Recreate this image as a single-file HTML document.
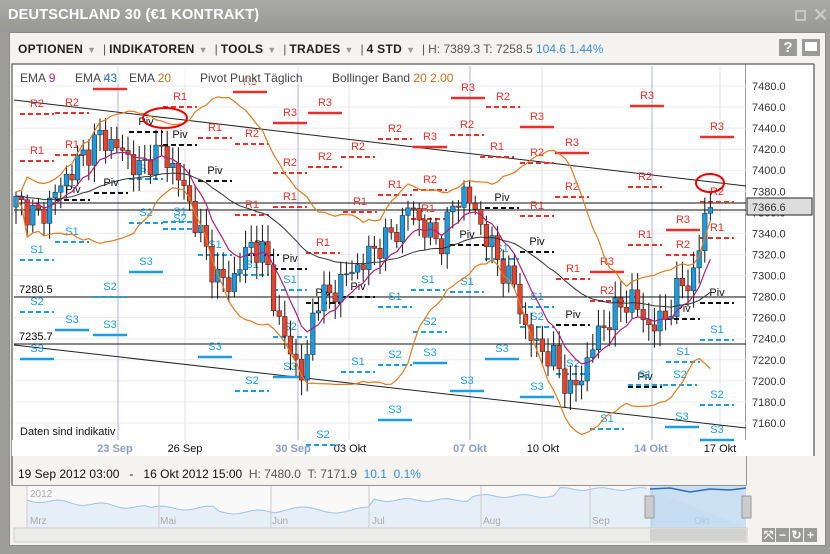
<!DOCTYPE html>
<html><head><meta charset="utf-8"><style>
*{margin:0;padding:0;box-sizing:border-box}
body{width:830px;height:554px;overflow:hidden;background:#9d9e9a;font-family:"Liberation Sans",sans-serif;position:relative}
#title{position:absolute;left:0;top:0;width:830px;height:32px;background:linear-gradient(#aaaba7,#979894);}
#title span{position:absolute;left:8px;top:7px;color:#fff;font-weight:bold;font-size:14.5px;letter-spacing:0.2px}
#panel{position:absolute;left:9px;top:32px;width:817px;height:514px;background:#f4f3ef;border:1px solid #8a8a86}
#tb{position:absolute;left:18px;top:42px;font-size:12px;color:#222;white-space:nowrap}
#tb b{font-weight:bold;letter-spacing:0.3px}
.ar{color:#999;font-size:9px;margin:0 4px}
.sep{color:#555;margin:0 3px}
.ib{position:absolute;top:39px;width:18px;height:17px;background:#9a9a96;color:#fff;font-weight:bold;font-size:15px;text-align:center;line-height:17px}
svg{position:absolute;left:0;top:0}
</style></head><body>
<div id="title"><span>DEUTSCHLAND 30 (€1 KONTRAKT)</span>
<div style="position:absolute;left:795px;top:10px;width:11px;height:11px;border:2px solid #c8c9c5;"></div>
<div style="position:absolute;left:813px;top:5px;color:#c8c9c5;font-size:18px;font-weight:bold">✕</div></div>
<div id="panel"></div>
<div id="tb"><b>OPTIONEN</b><span class="ar">▼</span><span class="sep">|</span><b>INDIKATOREN</b><span class="ar">▼</span><span class="sep">|</span><b>TOOLS</b><span class="ar">▼</span><span class="sep">|</span><b>TRADES</b><span class="ar">▼</span><span class="sep">|</span><b>4 STD</b><span class="ar">▼</span><span class="sep">|</span><span style="color:#555">H: 7389.3 T: 7258.5 </span><span style="color:#3a8fd0">104.6 1.44%</span></div>
<div class="ib" style="left:779px">?</div>
<div class="ib" style="left:802px"><div style="width:12px;height:9px;background:#fff;margin:3px auto 0"></div></div>
<svg id="s" width="830" height="554" font-family="Liberation Sans, sans-serif"></svg>
<div style="position:absolute;left:18px;top:467px;font-size:12px;color:#111;white-space:nowrap">19 Sep 2012 03:00 &nbsp; - &nbsp; 16 Okt 2012 15:00 &nbsp;<span style="color:#555">H: 7480.0 &nbsp;T: 7171.9</span> &nbsp;<span style="color:#3a8fd0">10.1 &nbsp;0.1%</span></div>
<script>
const S=document.getElementById('s');let h='';
const y=p=>86+(7480-p)*1.053;
h+='<rect x="12" y="64" width="734" height="421" fill="#fff" stroke="#333"/>';
h+='<rect x="746" y="64" width="68" height="392" fill="#fff"/>';
h+='<line x1="746" y1="64" x2="814" y2="64" stroke="#333"/><line x1="814" y1="64" x2="814" y2="456" stroke="#333"/>';
h+='<rect x="12" y="456" width="734" height="29" fill="#f4f3ef"/><line x1="12" y1="456" x2="12" y2="485" stroke="#333"/>';
h+='<rect x="12" y="440" width="734" height="16" fill="#fff"/>';
for(let p=7160;p<=7480;p+=20){h+=`<line x1="14" y1="${y(p)}" x2="746" y2="${y(p)}" stroke="#ececec"/>`;h+=`<text x="752" y="${y(p)+4}" font-size="11" fill="#333">${p}.0</text>`;}
const vg=[[118,1],[185,0],[298,1],[349,0],[470,1],[542,0],[652,1],[720,0]];
vg.forEach(v=>h+=`<line x1="${v[0]}" y1="66" x2="${v[0]}" y2="440" stroke="${v[1]?'#aab4d8':'#e2e2e2'}"/>`);
const dl=[[115,'23 Sep',1],[185,'26 Sep',0],[293,'30 Sep',1],[350,'03 Okt',0],[470,'07 Okt',1],[543,'10 Okt',0],[651,'14 Okt',1],[720,'17 Okt',0]];
dl.forEach(d=>h+=`<text x="${d[0]}" y="452" font-size="11" text-anchor="middle" fill="${d[2]?'#8a9cc0':'#111'}" ${d[2]?'font-weight="bold"':''}>${d[1]}</text>`);
h+='<line x1="14" y1="100" x2="746" y2="186" stroke="#222"/><line x1="14" y1="345" x2="746" y2="428" stroke="#222"/>';
h+='<line x1="14" y1="203" x2="746" y2="203" stroke="#111"/><line x1="14" y1="210" x2="746" y2="210" stroke="#111"/>';
h+='<line x1="14" y1="297" x2="746" y2="297" stroke="#111"/><line x1="14" y1="344" x2="746" y2="344" stroke="#111"/>';
h+='<text x="19" y="293" font-size="11">7280.5</text><text x="19" y="340" font-size="11">7235.7</text>';
const R='#e8302a',B='#1c9de0';
function lv(t,x,yy,c,solid){const col=t[0]=='R'?R:(t[0]=='S'?B:'#111');h+=`<text x="${x}" y="${yy}" font-size="11" text-anchor="middle" fill="${col}">${t}</text>`;h+=`<line x1="${x-17}" y1="${yy+7}" x2="${x+17}" y2="${yy+7}" stroke="${col}" stroke-width="${t[1]=='3'?2.5:2}" ${solid?'':'stroke-dasharray="5,3"'}/>`;}
const L=[['R2',37,107],['R2',72,106],['R3',110,82],['R1',180,100],['R3',250,85],['R3',290,116],['R3',325,106],['R3',468,91],['R2',503,100],['R3',537,120],['R3',647,99],['R3',717,130],['R1',37,154],['R1',72,148],['R1',215,131],['R2',252,137],['R2',395,132],['R3',430,140],['R2',467,128],['R3',572,146],['R2',358,150],['R2',325,160],['R2',290,166],['R1',497,150],['R2',537,156],['R1',395,188],['R2',430,183],['R2',572,190],['R2',645,180],['R2',717,195],['R1',252,208],['R1',290,200],['R1',360,205],['R1',428,212],['R1',537,209],['R3',683,223],['R1',645,238],['R2',683,248],['R1',717,231],['R1',323,246],['R1',573,272],['R3',607,265],['R2',607,294],
['Piv',73,193],['Piv',111,186],['Piv',146,125],['Piv',180,138],['Piv',215,174],['Piv',262,248],['Piv',290,262],['Piv',323,296],['Piv',358,290],['Piv',467,238],['Piv',502,201],['Piv',537,245],['Piv',573,318],['Piv',645,380],['Piv',683,312],['Piv',717,296],
['S1',37,253],['S1',72,235],['S1',146,172],['S1',180,215],['S1',215,248],['S1',252,268],['S1',290,283],['S1',358,365],['S1',395,300],['S1',428,283],['S1',467,285],['S1',502,252],['S1',537,300],['S1',645,378],['S1',683,355],['S1',717,333],['S1',607,422],
['S2',37,305],['S2',110,290],['S2',146,216],['S2',180,222],['S2',252,384],['S2',290,330],['S2',323,438],['S2',395,358],['S2',430,325],['S2',537,320],['S2',573,367],['S2',680,378],['S2',717,398],
['S3',37,352],['S3',72,323],['S3',110,328],['S3',146,265],['S3',215,350],['S3',290,370],['S3',395,413],['S3',430,356],['S3',467,384],['S3',502,352],['S3',537,390],['S3',682,420],['S3',717,433]];
L.forEach(l=>lv(l[0],l[1],l[2],0,l[0][1]=='3'));
const cp=[[15,7370],[40,7355],[60,7385],[80,7410],[100,7432],[120,7420],[140,7400],[160,7420],[175,7400],[185,7380],[200,7340],[215,7300],[230,7290],[250,7330],[265,7320],[280,7250],[295,7220],[305,7200],[315,7280],[330,7280],[345,7300],[360,7310],[380,7330],[400,7345],[410,7370],[420,7350],[440,7330],[455,7370],[465,7380],[480,7350],[500,7310],[515,7290],[525,7250],[540,7230],[555,7220],[570,7190],[580,7200],[595,7240],[610,7260],[630,7280],[650,7250],[665,7260],[680,7290],[695,7300],[705,7360],[712,7366]];
function ip(x){for(let i=1;i<cp.length;i++){if(x<=cp[i][0]){const a=cp[i-1],b=cp[i];return a[1]+(b[1]-a[1])*(x-a[0])/(b[0]-a[0]);}}return 7366;}
let cl=[],xs=[],prev=7365;
for(let i=0;i<125;i++){const x=16+i*5.6;const c=ip(x)+Math.sin(i*2.3)*9+Math.cos(i*1.7)*6;xs.push(x);cl.push(c);
const o=prev;const hi=Math.max(o,c)+4+Math.abs(Math.sin(i*3.1))*12,lo=Math.min(o,c)-4-Math.abs(Math.cos(i*2.7))*12;
h+=`<line x1="${x}" y1="${y(hi)}" x2="${x}" y2="${y(lo)}" stroke="#111"/>`;
const up=c>=o;h+=`<rect x="${x-2.3}" y="${y(Math.max(o,c))}" width="4.6" height="${Math.max(1,Math.abs(o-c)*1.053)}" fill="${up?'#1a9be0':'#e8412c'}" stroke="#222" stroke-width="0.5"/>`;prev=c;}
function ema(n){let e=cl[0],k=2/(n+1),r=[];cl.forEach(c=>{e=c*k+e*(1-k);r.push(e)});return r;}
const pl=(a,col,w)=>{h+=`<polyline fill="none" stroke="${col}" stroke-width="${w}" points="${a.map((v,i)=>xs[i]+','+y(v)).join(' ')}"/>`;};
pl(ema(9),'#b0207a',1.2);pl(ema(43),'#333',1);
let up=[],dn=[];for(let i=0;i<cl.length;i++){const s=cl.slice(Math.max(0,i-19),i+1);const m=s.reduce((a,b)=>a+b)/s.length;const sd=Math.sqrt(s.reduce((a,b)=>a+(b-m)*(b-m),0)/s.length);up.push(m+2*sd+4);dn.push(m-2*sd-4);}
pl(up,'#e07b20',1.2);pl(dn,'#e07b20',1.2);
h+='<ellipse cx="165" cy="118" rx="22" ry="10" fill="none" stroke="#e00" stroke-width="2"/><ellipse cx="710" cy="183" rx="14" ry="9" fill="none" stroke="#e00" stroke-width="2"/>';
h+='<rect x="14" y="66" width="380" height="18" fill="#fff" opacity="0.6"/>';
h+='<text y="82" font-size="12" fill="#444"><tspan x="20">EMA </tspan><tspan fill="#b0207a">9</tspan><tspan x="75">EMA </tspan><tspan fill="#1a8ab0">43</tspan><tspan x="129">EMA </tspan><tspan fill="#c07020">20</tspan><tspan x="200">Pivot Punkt  Täglich</tspan><tspan x="332">Bollinger Band  </tspan><tspan fill="#d07020">20  2.00</tspan></text>';
h+='<text x="20" y="435" font-size="11" fill="#111">Daten sind indikativ</text>';
h+='<rect x="747" y="198" width="65" height="17" fill="#ddd" stroke="#222"/><text x="752" y="211" font-size="11" fill="#333">7366.6</text>';
h+='<rect x="27" y="486" width="720" height="42" fill="#f9f9f9"/>';
let np='';for(let i=0;i<=100;i++){const x=27+i*6.2;let v;
if(i<20)v=500+i*0.4+Math.sin(i*0.9)*2;else if(i<40)v=508+Math.sin(i*0.8)*2+(i>30?4:0);else if(i<56)v=510-Math.sin(i*0.6)*3;else if(i<72)v=500+Math.sin(i)*1.5;else if(i<86)v=496+Math.sin(i)*1.5;else v=489+Math.sin(i)*1.5;
np+=x+','+v+' ';}
h+=`<polygon points="27,528 ${np} 747,528" fill="#e6eef8"/><polyline points="${np}" fill="none" stroke="#9cc2ea"/>`;
[27,159,271,369,481,590,652].forEach(x=>h+=`<line x1="${x}" y1="486" x2="${x}" y2="528" stroke="#ccc"/>`);
[['2012',30,497],['Mrz',30,524],['Mai',160,524],['Jun',272,524],['Jul',372,524],['Aug',483,524],['Sep',592,524],['Okt',694,524]].forEach(t=>h+=`<text x="${t[1]}" y="${t[2]}" font-size="10" fill="#aaa">${t[0]}</text>`);
h+='<rect x="650" y="486" width="96" height="42" fill="#b8d6f0" opacity="0.7"/><polyline points="650,489 670,488 690,492 710,489 730,490 746,488" fill="none" stroke="#2a6cc0" stroke-width="1.5"/>';
h+='<rect x="645" y="496" width="9" height="22" fill="#ccc" stroke="#999"/><rect x="742" y="496" width="9" height="22" fill="#ccc" stroke="#999"/>';
h+='<rect x="14" y="528" width="733" height="14" fill="#ebebea" stroke="#ccc"/><rect x="650" y="529" width="96" height="12" fill="#d2d2d0"/>';
[[762,'⤧'],[776,'−'],[790,'↻'],[804,'+']].forEach(b=>h+=`<rect x="${b[0]}" y="528" width="13" height="14" fill="#9a9a96"/><text x="${b[0]+6.5}" y="539" font-size="12" fill="#fff" text-anchor="middle" font-weight="bold">${b[1]}</text>`);
S.innerHTML=h;
</script>
</body></html>
